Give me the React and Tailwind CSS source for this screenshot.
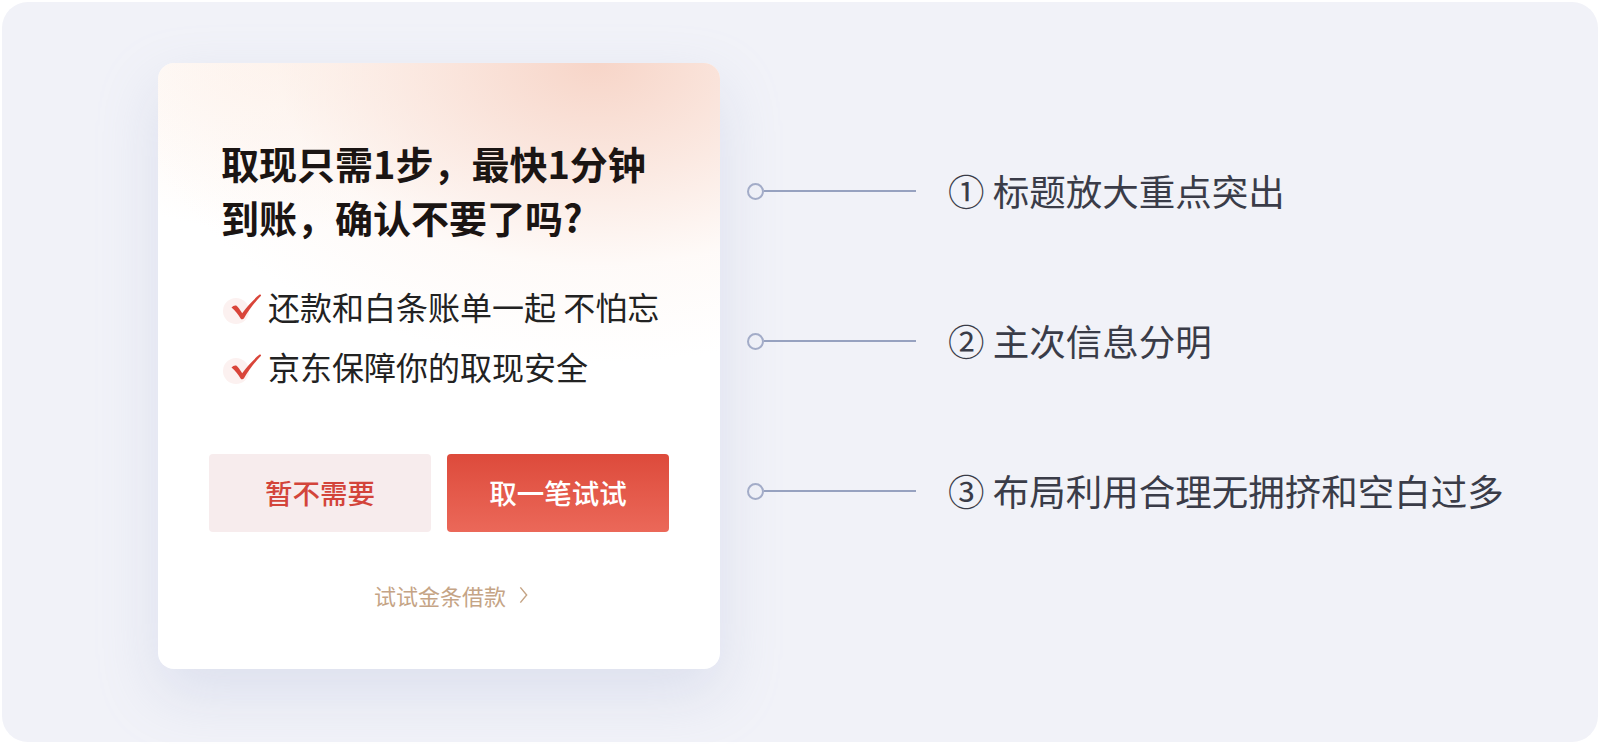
const FONT = "font-['Noto_Sans_CJK_SC','Noto_Sans',sans-serif]";

const Tick = () => (
	<span className="relative w-[36px] h-[32px] flex-none">
		<span className="absolute left-[-4px] top-[8px] w-[26px] h-[26px] rounded-full bg-[#fcf1f0]" />
		<svg viewBox="0 0 32 28" className="absolute left-[3px] top-[3px] w-[32px] h-[28px]">
			<path
				d="M1.5 14.5 C3 12.8 4.8 12 6.2 12.6 C8 13.6 10 17 12.2 20.2 C17 13.6 23 6.8 29.6 1.6 C30.6 1 31.6 2 30.8 3 C24.4 9.6 18.6 17.4 14 25.2 C13.2 26.6 11.4 26.8 10.6 25.4 C8.2 21.4 5.4 17.8 1.5 14.5 Z"
				fill="#d9453a"
			/>
		</svg>
	</span>
);

const Note = ({ n, text }) => (
	<div className="flex items-center h-[40px]">
		<span className="w-[17px] h-[17px] rounded-full border-2 border-[#a3acc8] flex-none" />
		<span className="w-[152px] h-[2px] bg-[#97a2c0] flex-none" />
		<span className="ml-[32px] text-[36.5px] leading-[40px] text-[#3a3c48] whitespace-nowrap">
			{n} {text}
		</span>
	</div>
);

export default function App() {
	return (
		<div className={`w-[1600px] h-[744px] bg-white p-[2px] ${FONT}`}>
			<div className="w-full h-full rounded-[26px] bg-[#f1f2f8] flex items-start pt-[61px] pl-[156px]">
				<div className="w-[562px] h-[606px] flex-none rounded-[16px] bg-white shadow-[0_24px_60px_rgba(172,182,214,0.3)] overflow-hidden">
					<div className="w-full h-full flex flex-col bg-[radial-gradient(ellipse_470px_300px_at_78%_0%,#f7d5c8_0%,rgba(250,228,219,0.8)_38%,rgba(253,243,238,0.4)_68%,rgba(255,255,255,0)_100%),radial-gradient(ellipse_280px_170px_at_22%_0%,rgba(253,241,233,0.85)_0%,rgba(255,255,255,0)_100%)]">
						<h1 className="pt-[73px] pl-[63px] text-[38px] leading-[54px] font-bold text-[#1b1513]">
							取现只需1步，最快1分钟
							<br />
							到账，确认不要了吗?
						</h1>

						<ul className="mt-[32px] pl-[69px] flex flex-col text-[32px] leading-[60px] text-[#222]">
							<li className="flex items-center gap-[5px]">
								<Tick />
								<span>还款和白条账单一起 不怕忘</span>
							</li>
							<li className="flex items-center gap-[5px]">
								<Tick />
								<span>京东保障你的取现安全</span>
							</li>
						</ul>

						<div className="mt-[58px] px-[51px] flex gap-[16px]">
							<button className="flex-1 h-[78px] rounded-[4px] bg-[#f7eced] text-[#d3443a] text-[27.5px] font-medium">
								暂不需要
							</button>
							<button className="flex-1 h-[78px] rounded-[4px] bg-gradient-to-b from-[#dd4a3b] to-[#eb6859] text-white text-[27.5px] font-medium">
								取一笔试试
							</button>
						</div>

						<a className="mt-[48px] ml-[24px] self-center flex items-center gap-[13px] text-[22px] leading-[30px] text-[#c5a485]">
							试试金条借款
							<svg viewBox="0 0 10 20" className="w-[9px] h-[18px]" fill="none" stroke="#c5a485" strokeWidth="1.6">
								<path d="M1.5 1.5 L8.5 10 L1.5 18.5" />
							</svg>
						</a>
					</div>
				</div>

				<div className="ml-[27px] mt-[108px] flex flex-col gap-[110px]">
					<Note n="①" text="标题放大重点突出" />
					<Note n="②" text="主次信息分明" />
					<Note n="③" text="布局利用合理无拥挤和空白过多" />
				</div>
			</div>
		</div>
	);
}
